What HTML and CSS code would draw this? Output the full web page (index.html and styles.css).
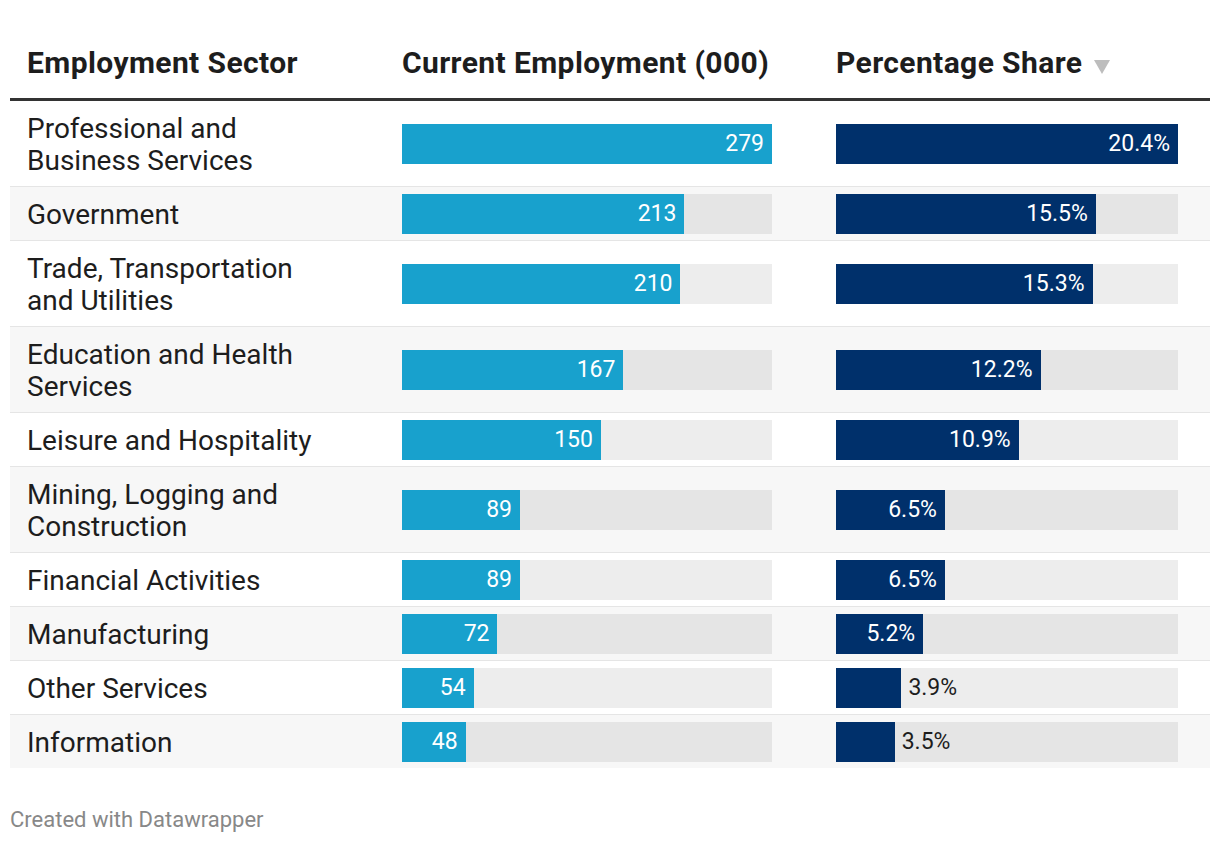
FILE: index.html
```html
<!DOCTYPE html>
<html lang="en">
<head>
<meta charset="utf-8">
<title>Employment by Sector</title>
<link rel="stylesheet" href="styles.css">
</head>
<body>
<table class="dw-table">
  <colgroup>
    <col class="c-name">
    <col class="c-emp">
    <col class="c-pct">
  </colgroup>
  <thead>
    <tr>
      <th class="name">Employment Sector</th>
      <th class="emp">Current Employment (000)</th>
      <th class="pct">Percentage Share <svg class="sort" width="16" height="14" viewBox="0 0 16 14"><polygon points="0,0 16,0 8,14" fill="#bdbdbd"/></svg></th>
    </tr>
  </thead>
  <tbody>
    <tr>
      <td class="name">Professional and<br>Business Services</td>
      <td class="emp"><div class="track"><div class="bar light" style="width:100%"><span class="val">279</span></div></div></td>
      <td class="pct"><div class="track"><div class="bar dark" style="width:100%"><span class="val">20.4%</span></div></div></td>
    </tr>
    <tr>
      <td class="name">Government</td>
      <td class="emp"><div class="track"><div class="bar light" style="width:76.34%"><span class="val">213</span></div></div></td>
      <td class="pct"><div class="track"><div class="bar dark" style="width:75.98%"><span class="val">15.5%</span></div></div></td>
    </tr>
    <tr>
      <td class="name">Trade, Transportation<br>and Utilities</td>
      <td class="emp"><div class="track"><div class="bar light" style="width:75.27%"><span class="val">210</span></div></div></td>
      <td class="pct"><div class="track"><div class="bar dark" style="width:75%"><span class="val">15.3%</span></div></div></td>
    </tr>
    <tr>
      <td class="name">Education and Health<br>Services</td>
      <td class="emp"><div class="track"><div class="bar light" style="width:59.86%"><span class="val">167</span></div></div></td>
      <td class="pct"><div class="track"><div class="bar dark" style="width:59.8%"><span class="val">12.2%</span></div></div></td>
    </tr>
    <tr>
      <td class="name">Leisure and Hospitality</td>
      <td class="emp"><div class="track"><div class="bar light" style="width:53.76%"><span class="val">150</span></div></div></td>
      <td class="pct"><div class="track"><div class="bar dark" style="width:53.43%"><span class="val">10.9%</span></div></div></td>
    </tr>
    <tr>
      <td class="name">Mining, Logging and<br>Construction</td>
      <td class="emp"><div class="track"><div class="bar light" style="width:31.9%"><span class="val">89</span></div></div></td>
      <td class="pct"><div class="track"><div class="bar dark" style="width:31.86%"><span class="val">6.5%</span></div></div></td>
    </tr>
    <tr>
      <td class="name">Financial Activities</td>
      <td class="emp"><div class="track"><div class="bar light" style="width:31.9%"><span class="val">89</span></div></div></td>
      <td class="pct"><div class="track"><div class="bar dark" style="width:31.86%"><span class="val">6.5%</span></div></div></td>
    </tr>
    <tr>
      <td class="name">Manufacturing</td>
      <td class="emp"><div class="track"><div class="bar light" style="width:25.81%"><span class="val">72</span></div></div></td>
      <td class="pct"><div class="track"><div class="bar dark" style="width:25.49%"><span class="val">5.2%</span></div></div></td>
    </tr>
    <tr>
      <td class="name">Other Services</td>
      <td class="emp"><div class="track"><div class="bar light" style="width:19.35%"><span class="val">54</span></div></div></td>
      <td class="pct"><div class="track"><div class="bar dark" style="width:19.12%"></div><span class="val out">3.9%</span></div></td>
    </tr>
    <tr>
      <td class="name">Information</td>
      <td class="emp"><div class="track"><div class="bar light" style="width:17.2%"><span class="val">48</span></div></div></td>
      <td class="pct"><div class="track"><div class="bar dark" style="width:17.16%"></div><span class="val out">3.5%</span></div></td>
    </tr>
  </tbody>
</table>
<footer class="credit">Created with Datawrapper</footer>
</body>
</html>
```

FILE: styles.css
```css
html, body {
  margin: 0;
  padding: 0;
  background: #ffffff;
}

body {
  padding: 30px 10px 0;
  font-family: Roboto, "Liberation Sans", Arial, sans-serif;
  color: #1d1d1d;
}

.dw-table {
  width: 1200px;
  table-layout: fixed;
  border-collapse: collapse;
  border-spacing: 0;
}

.c-name { width: 392px; }
.c-emp { width: 402px; }
.c-pct { width: 406px; }

.dw-table th {
  font-size: 30px;
  font-weight: 700;
  letter-spacing: 0.4px;
  line-height: 32px;
  text-align: left;
  padding: 17px 0 19px;
  border-bottom: 3px solid #333333;
  white-space: nowrap;
  color: #1d1d1d;
}

.dw-table th.name { padding-left: 17px; }
.dw-table th.emp { padding-right: 32px; }
.dw-table th.pct { padding-left: 32px; padding-right: 32px; }

.sort {
  display: inline-block;
  margin-left: 4px;
  vertical-align: -1px;
}

.dw-table tbody tr + tr td {
  border-top: 1px solid #e5e5e5;
}

.dw-table tbody tr:nth-child(even) {
  background: #f7f7f7;
}

.dw-table td {
  vertical-align: middle;
}

.dw-table td.name {
  font-size: 28px;
  line-height: 32px;
  padding: 12px 16px 9px 17px;
}

.dw-table td.emp {
  padding: 7px 32px 6px 0;
}

.dw-table td.pct {
  padding: 7px 32px 6px 32px;
}

.track {
  position: relative;
  display: flex;
  align-items: center;
  height: 40px;
  background: rgba(0, 0, 0, 0.07);
}

.bar {
  height: 40px;
  display: flex;
  align-items: center;
  justify-content: flex-end;
}

.bar.light { background: #18a1cd; }
.bar.dark { background: #00306b; }

.val {
  font-size: 23px;
  line-height: 40px;
  color: #ffffff;
  padding-right: 8px;
  white-space: nowrap;
}

.val.out {
  color: #1d1d1d;
  padding-right: 0;
  padding-left: 7px;
}

.credit {
  margin-top: 40px;
  font-size: 22px;
  line-height: 24px;
  color: #888888;
}
```
